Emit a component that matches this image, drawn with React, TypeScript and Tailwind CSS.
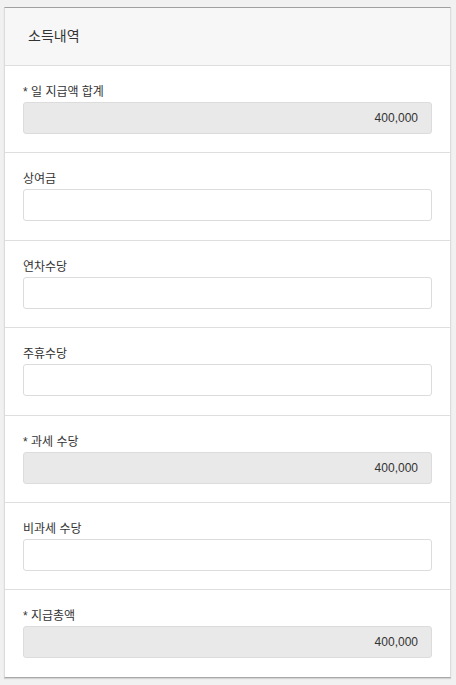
const fields = [
  { label: '* 일 지급액 합계', value: '400,000', readOnly: true },
  { label: '상여금', value: '', readOnly: false },
  { label: '연차수당', value: '', readOnly: false },
  { label: '주휴수당', value: '', readOnly: false },
  { label: '* 과세 수당', value: '400,000', readOnly: true },
  { label: '비과세 수당', value: '', readOnly: false },
  { label: '* 지급총액', value: '400,000', readOnly: true },
];

export default function App() {
  return (
    <div
      className="min-h-[685px] bg-[#f1f1f1] px-[4px] pt-[7px]"
      style={{ fontFamily: '"Liberation Sans", "Noto Sans CJK KR", sans-serif' }}
    >
      <div className="w-[447px] border border-t-[#a0a0a0] border-x-[#dcdcdc] border-b-[#a8a8a8] bg-white shadow-[0_1px_1px_rgba(0,0,0,0.12)]">
        <div className="flex h-[58px] items-center border-b border-[#dedede] bg-[#f7f7f7] pl-[23px] text-[14px] text-[#333]">
          소득내역
        </div>
        {fields.map((f, i) => (
          <div
            key={f.label}
            className={`px-[18px] pt-[18px] pb-[18.4px] ${i < fields.length - 1 ? 'border-b border-[#dedede]' : ''}`}
          >
            <div className="h-[16px] text-[12px] leading-[16px] text-[#333]">{f.label}</div>
            <input
              readOnly={f.readOnly}
              defaultValue={f.value}
              className={`mt-[2px] block h-[32px] w-full rounded-[3px] border border-[#dcdcdc] px-[13px] text-right text-[12px] text-[#333] outline-none ${
                f.readOnly ? 'bg-[#e9e9e9]' : 'bg-white'
              }`}
            />
          </div>
        ))}
      </div>
    </div>
  );
}
